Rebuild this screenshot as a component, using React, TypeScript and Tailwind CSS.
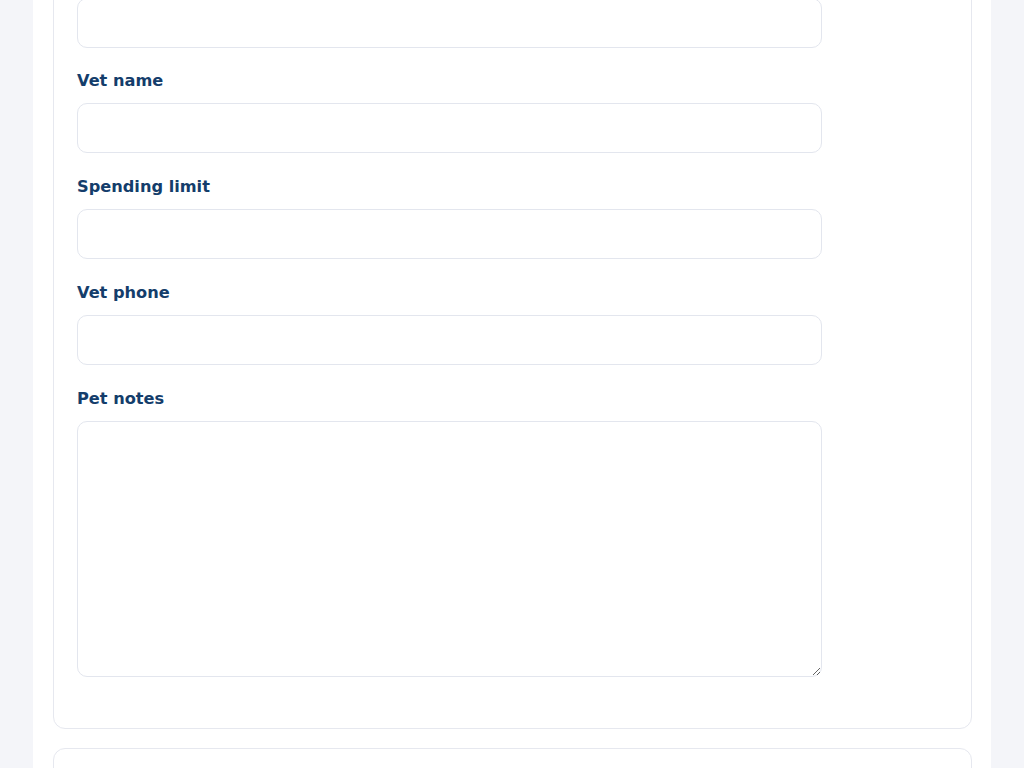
import { useState } from 'react';

type Field = {
  id: string;
  label: string;
  multiline?: boolean;
};

const FIELDS: Field[] = [
  { id: 'vetName', label: 'Vet name' },
  { id: 'spendingLimit', label: 'Spending limit' },
  { id: 'vetPhone', label: 'Vet phone' },
  { id: 'petNotes', label: 'Pet notes', multiline: true },
];

export default function App() {
  const [values, setValues] = useState<Record<string, string>>({});

  const update = (id: string, v: string) => setValues((prev) => ({ ...prev, [id]: v }));

  return (
    <div className="min-h-screen bg-[#f4f5f9] font-['DejaVu_Sans',sans-serif] overflow-hidden">
      <div className="mx-auto h-[768px] w-[958px] bg-white pl-5 pr-[19px] overflow-hidden">
        {/* Pet details card (scrolled) */}
        <div className="-mt-[27px] rounded-xl border border-[#e6e8ef] bg-white pl-[23px] pr-6 pt-6 pb-[51px]">
          {/* previous field, mostly above the fold */}
          <input
            className="block h-[50px] w-[745px] rounded-[10px] border border-[#e3e6ee] bg-white px-3 text-base text-[#1f2937] outline-none"
            aria-label="Vet clinic"
          />

          {FIELDS.map((f, i) => (
            <div key={f.id} className={i === 0 ? 'mt-[21px]' : 'mt-[22px]'}>
              <label htmlFor={f.id} className="mb-[10px] block text-[16.2px] font-bold leading-6 text-[#143d6b]">
                {f.label}
              </label>
              {f.multiline ? (
                <textarea
                  id={f.id}
                  value={values[f.id] ?? ''}
                  onChange={(e) => update(f.id, e.target.value)}
                  className="block h-[256px] w-[745px] rounded-[10px] border border-[#e3e6ee] bg-white px-3 py-2 text-base text-[#1f2937] outline-none"
                />
              ) : (
                <input
                  id={f.id}
                  value={values[f.id] ?? ''}
                  onChange={(e) => update(f.id, e.target.value)}
                  className="block h-[50px] w-[745px] rounded-[10px] border border-[#e3e6ee] bg-white px-3 text-base text-[#1f2937] outline-none"
                />
              )}
            </div>
          ))}
        </div>

        {/* Next card */}
        <div className="mt-[19px] h-[120px] rounded-xl border border-[#e6e8ef] bg-white" />
      </div>
    </div>
  );
}
